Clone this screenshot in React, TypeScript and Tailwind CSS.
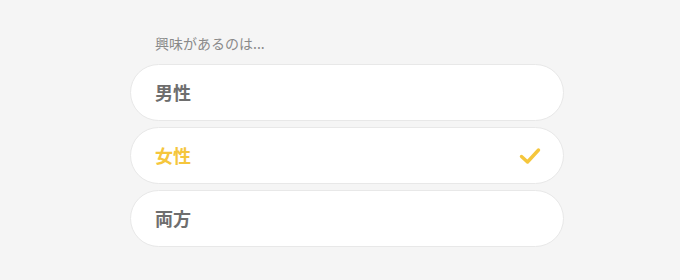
import React from "react";

const font = { fontFamily: '"Noto Sans CJK JP", "Noto Sans", sans-serif' };

function Check() {
  return (
    <svg width="22" height="18" viewBox="0 0 22 18" fill="none">
      <path d="M2.5 9.5 L8.5 15 L19.5 3" stroke="#f5c63c" strokeWidth="3.4" strokeLinecap="round" strokeLinejoin="round" />
    </svg>
  );
}

export default function App() {
  const items = [
    { label: "男性", selected: false },
    { label: "女性", selected: true },
    { label: "両方", selected: false },
  ];
  return (
    <div className="w-[680px] h-[280px] bg-[#f5f5f5] flex pl-[130px]" style={font}>
      <div className="w-[434px] pt-[33px] flex flex-col">
        <div className="pl-[25px] text-[14px] leading-[20px] text-[#8a8a8a] mb-[11px]">興味があるのは...</div>
        <div className="flex flex-col gap-[6px]">
          {items.map((it) => (
            <div
              key={it.label}
              className="h-[57px] rounded-full bg-white border border-[#e8e8e8] flex items-center justify-between pl-[24px] pr-[22px]"
            >
              <span className={`text-[18px] font-bold ${it.selected ? "text-[#f5c63c]" : "text-[#6e6e6e]"}`}>{it.label}</span>
              {it.selected && <Check />}
            </div>
          ))}
        </div>
      </div>
    </div>
  );
}
